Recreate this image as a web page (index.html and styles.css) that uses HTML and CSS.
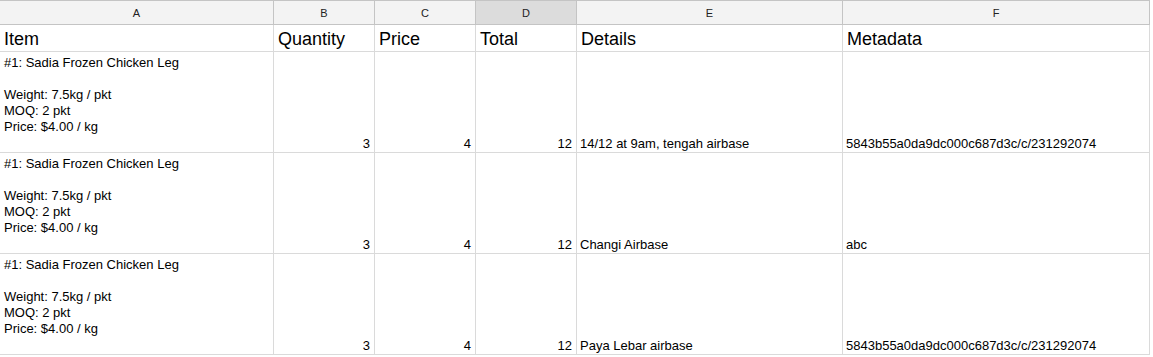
FILE: index.html
```html
<!DOCTYPE html>
<html>
<head>
<meta charset="utf-8">
<link rel="stylesheet" href="styles.css">
</head>
<body>
<div class="sheet">
  <div class="colhead">A</div>
  <div class="colhead">B</div>
  <div class="colhead">C</div>
  <div class="colhead sel">D</div>
  <div class="colhead">E</div>
  <div class="colhead">F</div>

  <div class="cell big">Item</div>
  <div class="cell big">Quantity</div>
  <div class="cell big">Price</div>
  <div class="cell big">Total</div>
  <div class="cell big">Details</div>
  <div class="cell big">Metadata</div>

  <div class="cell item">#1: Sadia Frozen Chicken Leg<br><br>Weight: 7.5kg / pkt<br>MOQ: 2 pkt<br>Price: $4.00 / kg</div>
  <div class="cell num">3</div>
  <div class="cell num">4</div>
  <div class="cell num">12</div>
  <div class="cell txt">14/12 at 9am, tengah airbase</div>
  <div class="cell txt">5843b55a0da9dc000c687d3c/c/231292074</div>

  <div class="cell item">#1: Sadia Frozen Chicken Leg<br><br>Weight: 7.5kg / pkt<br>MOQ: 2 pkt<br>Price: $4.00 / kg</div>
  <div class="cell num">3</div>
  <div class="cell num">4</div>
  <div class="cell num">12</div>
  <div class="cell txt">Changi Airbase</div>
  <div class="cell txt">abc</div>

  <div class="cell item">#1: Sadia Frozen Chicken Leg<br><br>Weight: 7.5kg / pkt<br>MOQ: 2 pkt<br>Price: $4.00 / kg</div>
  <div class="cell num">3</div>
  <div class="cell num">4</div>
  <div class="cell num">12</div>
  <div class="cell txt">Paya Lebar airbase</div>
  <div class="cell txt">5843b55a0da9dc000c687d3c/c/231292074</div>
</div>
</body>
</html>
```

FILE: styles.css
```css
html, body {
  margin: 0;
  padding: 0;
  background: #fff;
}
body {
  font-family: "Liberation Sans", Arial, sans-serif;
  color: #000;
}
.sheet {
  display: grid;
  grid-template-columns: 274px 101px 101px 101px 266px 307px;
  grid-template-rows: 25px 27px 101px 101px 101px;
  width: 1150px;
}
.colhead {
  background: #f3f3f3;
  border-top: 1px solid #c4c4c4;
  border-right: 1px solid #c4c4c4;
  border-bottom: 1px solid #c4c4c4;
  font-size: 11px;
  color: #222;
  display: flex;
  align-items: center;
  justify-content: center;
  box-sizing: border-box;
  height: 25px;
  padding-top: 1px;
}
.colhead.sel {
  background: #dcdcdc;
}
.cell {
  border-right: 1px solid #dadada;
  border-bottom: 1px solid #dadada;
  box-sizing: border-box;
  font-size: 13px;
  line-height: 16px;
  padding: 0 3px 0 4px;
  overflow: hidden;
  white-space: nowrap;
}
.big {
  font-size: 18px;
  line-height: 22px;
  display: flex;
  align-items: flex-end;
  padding-bottom: 1px;
}
.item {
  padding-top: 3px;
}
.num {
  display: flex;
  align-items: flex-end;
  justify-content: flex-end;
  padding-bottom: 0;
  padding-right: 4px;
}
.txt {
  display: flex;
  align-items: flex-end;
  padding-left: 3px;
}
```
